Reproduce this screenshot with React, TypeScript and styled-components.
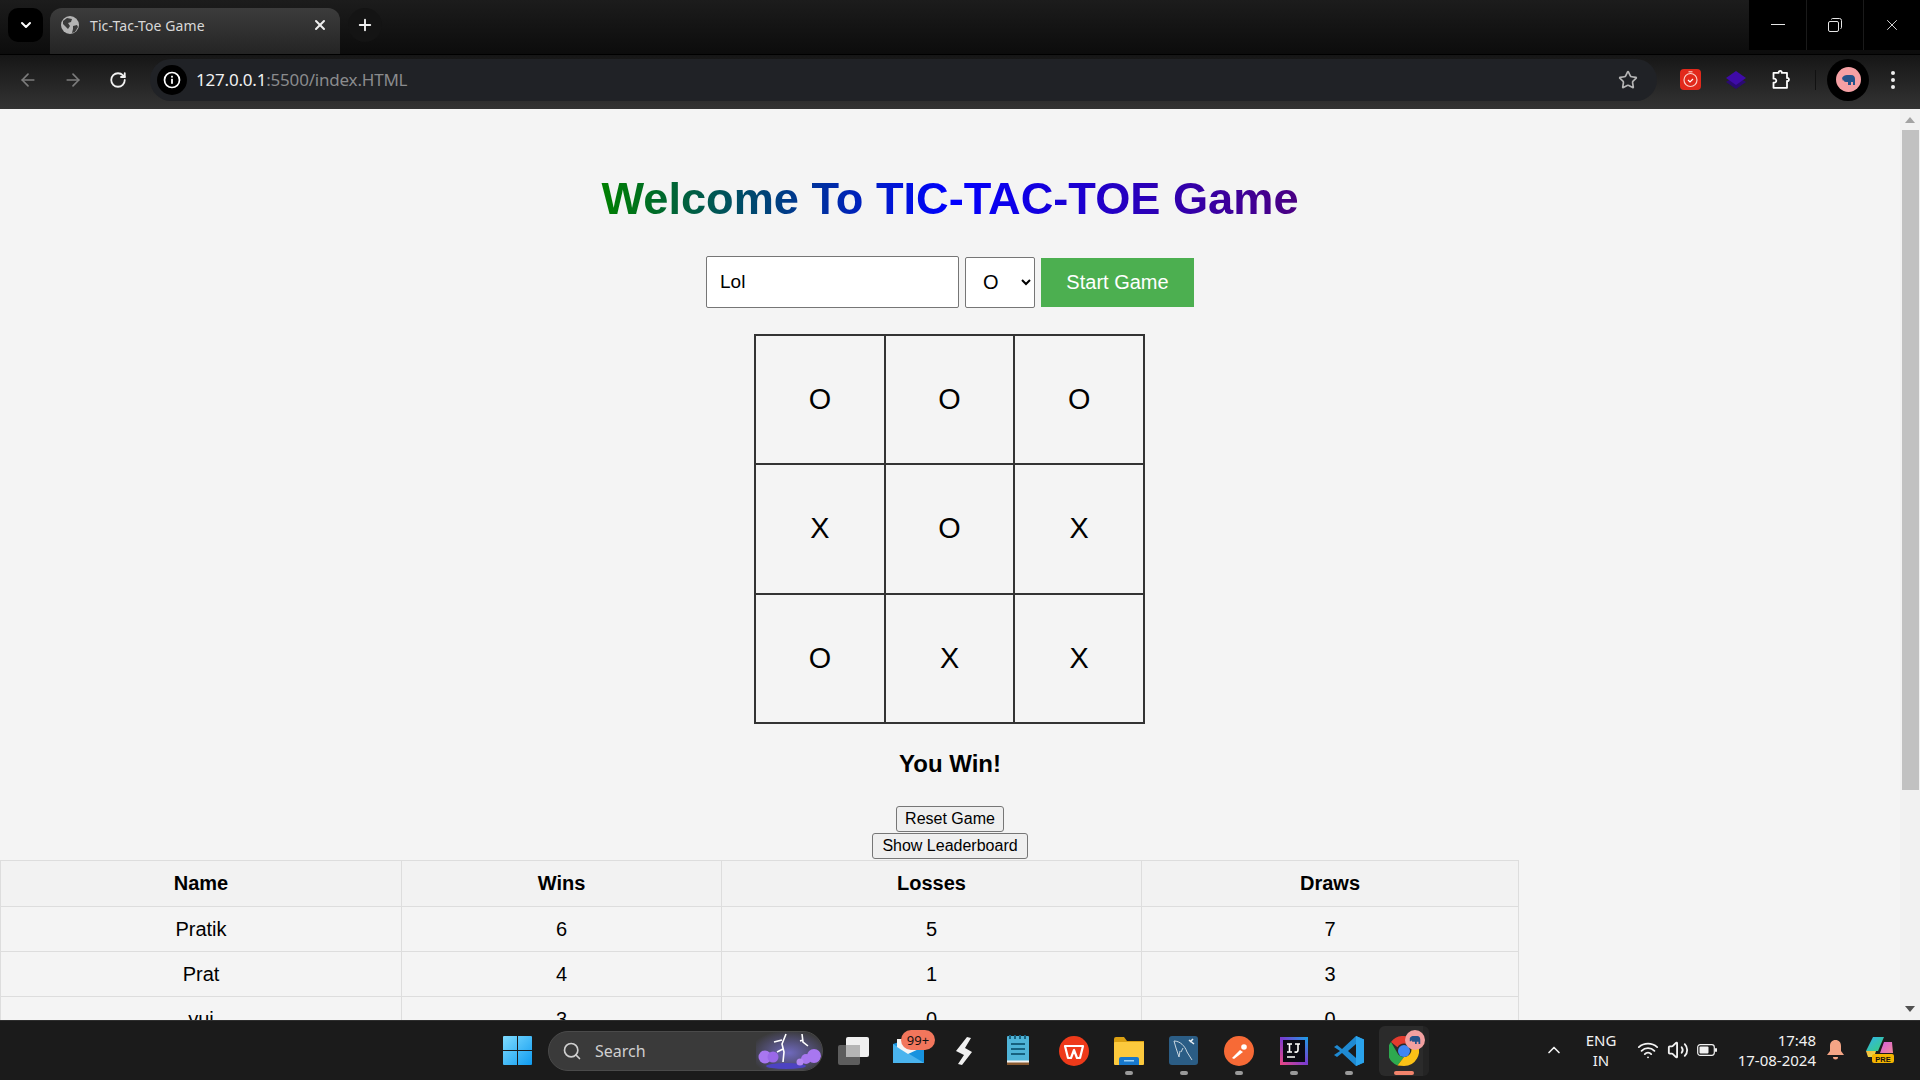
import React from 'react';
import styled, { createGlobalStyle } from 'styled-components';
import {
    ArrowLeft,
    ArrowRight,
    ChevronDown,
    ChevronUp,
    Plus,
    RotateCw,
    Search,
    Star,
    Volume2,
    Wifi,
    X,
} from 'lucide-react';

const GlobalStyle = createGlobalStyle`
    html, body {
        margin: 0;
        padding: 0;
        overflow: hidden;
        background: #f4f4f4;
    }
    * {
        box-sizing: border-box;
    }
`;

const Shell = styled.div`
    width: 1920px;
    height: 1080px;
    display: flex;
    flex-direction: column;
    overflow: hidden;
    font-family: 'Liberation Sans', Arial, sans-serif;
`;

/* browser chrome */

const TabStrip = styled.div`
    height: 55px;
    flex: none;
    display: flex;
    align-items: flex-start;
    padding: 8px 0 0 8px;
    background: linear-gradient(#1c1c1c, #0c0c0c);
    border-bottom: 1px solid #000;
`;

const TabListButton = styled.div`
    width: 35px;
    height: 34px;
    flex: none;
    display: flex;
    align-items: center;
    justify-content: center;
    background: #000;
    border-radius: 10px;
    color: #fff;
`;

const Tab = styled.div`
    width: 290px;
    height: 46px;
    flex: none;
    margin-left: 7px;
    padding: 0 12px 12px 10px;
    display: flex;
    align-items: center;
    gap: 10px;
    border-radius: 12px 12px 0 0;
    background: linear-gradient(#3c3c3c, #242424);
    color: #d8d8d8;
    font-family: 'Noto Sans', sans-serif;
    font-size: 14px;
    letter-spacing: 0.1px;
`;

const TabTitle = styled.span`
    flex: 1;
    white-space: nowrap;
`;

const NewTabButton = styled.div`
    width: 34px;
    height: 34px;
    flex: none;
    margin-left: 8px;
    display: flex;
    align-items: center;
    justify-content: center;
    border-radius: 50%;
    background: #141414;
    color: #f0f0f0;
`;

const WindowControls = styled.div`
    margin-left: auto;
    margin-top: -8px;
    height: 50px;
    display: flex;
    background: #000;
`;

const WindowButton = styled.div<{ $divided?: boolean }>`
    width: 57px;
    height: 50px;
    display: flex;
    align-items: center;
    justify-content: center;
    color: #e6e6e6;
    border-left: ${props => (props.$divided ? '1px solid #1a1a1a' : 'none')};
`;

const Toolbar = styled.div`
    height: 54px;
    flex: none;
    display: flex;
    align-items: center;
    padding-bottom: 5px;
    background: linear-gradient(#161616, #333333);
`;

const NavButton = styled.div<{ $dim?: boolean }>`
    width: 45px;
    height: 36px;
    flex: none;
    display: flex;
    align-items: center;
    justify-content: center;
    color: ${props => (props.$dim ? '#7c7c7c' : '#f2f2f2')};
`;

const NavGroup = styled.div`
    width: 140px;
    flex: none;
    display: flex;
    padding-left: 5px;
`;

const AddressBar = styled.div`
    width: 1507px;
    height: 42px;
    flex: none;
    margin-left: 10px;
    padding: 0 7px;
    display: flex;
    align-items: center;
    border-radius: 21px;
    background: #202226;
`;

const InfoBadge = styled.div`
    width: 30px;
    height: 30px;
    flex: none;
    display: flex;
    align-items: center;
    justify-content: center;
    border-radius: 50%;
    background: #000;
`;

const Url = styled.div`
    flex: 1;
    margin-left: 9px;
    font-family: 'Noto Sans', sans-serif;
    font-size: 17px;
    letter-spacing: -0.2px;
    color: #8a8b8d;
`;

const UrlHost = styled.span`
    color: #f1f1f1;
`;

const StarSlot = styled.div`
    width: 30px;
    margin-right: 7px;
    display: flex;
    justify-content: center;
    color: #b5b5b5;
`;

const ExtensionSlot = styled.div`
    width: 46px;
    flex: none;
    display: flex;
    align-items: center;
    justify-content: center;
`;

const Extensions = styled.div`
    display: flex;
    align-items: center;
    margin-left: 10px;
`;

const ToolbarDivider = styled.div`
    width: 1px;
    height: 20px;
    margin: 0 11px 0 10px;
    background: #111;
`;

const AvatarRing = styled.div`
    width: 42px;
    height: 42px;
    flex: none;
    display: flex;
    align-items: center;
    justify-content: center;
    border-radius: 50%;
    background: #000;
`;

const MenuDots = styled.div`
    width: 48px;
    display: flex;
    justify-content: center;
`;

/* page */

const PageArea = styled.div`
    flex: 1;
    min-height: 0;
    display: flex;
    background: #f4f4f4;
`;

const PageScroll = styled.main`
    flex: 1;
    min-width: 0;
    overflow: hidden;
    display: flex;
    flex-direction: column;
    align-items: center;
`;

const Heading = styled.h1`
    flex: none;
    margin: 64px 0 31px;
    font-size: 45.2px;
    line-height: 52px;
    font-weight: 700;
    background: linear-gradient(to right, green, blue, indigo);
    -webkit-background-clip: text;
    background-clip: text;
    color: transparent;
`;

const SetupRow = styled.div`
    flex: none;
    display: flex;
    align-items: center;
    gap: 6px;
    height: 52px;
`;

const NameInput = styled.input`
    width: 253px;
    height: 52px;
    padding: 0 13px;
    border: 1px solid #767676;
    border-radius: 2px;
    background: #fff;
    font-family: inherit;
    font-size: 19px;
    color: #000;
`;

const MarkSelect = styled.select`
    width: 70px;
    height: 51px;
    padding: 0 0 0 13px;
    border: 1px solid #767676;
    border-radius: 2px;
    background-color: #fff;
    font-family: inherit;
    font-size: 20px;
    color: #000;
`;

const StartButton = styled.button`
    width: 153px;
    height: 49px;
    border: none;
    background: #4caf50;
    color: #fff;
    font-family: inherit;
    font-size: 20px;
`;

const Board = styled.div`
    flex: none;
    width: 391px;
    height: 390px;
    margin: 26px 1px 0 0;
    display: grid;
    grid-template-columns: repeat(3, 1fr);
    grid-template-rows: repeat(3, 1fr);
    border: 1px solid #333;
`;

const Cell = styled.div`
    display: flex;
    align-items: center;
    justify-content: center;
    border: 1px solid #333;
    font-size: 28.8px;
    color: #000;
`;

const Result = styled.div`
    flex: none;
    margin-top: 26px;
    height: 28px;
    line-height: 28px;
    font-size: 24px;
    font-weight: 700;
    color: #000;
`;

const ActionButton = styled.button<{ $pad: number }>`
    flex: none;
    display: block;
    height: 26px;
    padding: 0 ${props => props.$pad}px;
    border: 1px solid #767676;
    border-radius: 3px;
    background: #efefef;
    font-family: inherit;
    font-size: 16px;
    color: #000;
`;

const ResetButton = styled(ActionButton)`
    margin-top: 28px;
    margin-bottom: 1px;
`;

const Leaderboard = styled.table`
    flex: none;
    align-self: flex-start;
    width: 1518px;
    margin-top: 1px;
    border-collapse: collapse;
    table-layout: fixed;
    font-size: 20px;
    color: #000;
`;

const HeadCell = styled.th`
    height: 46px;
    padding: 0;
    border: 1px solid #ddd;
    background: #f2f2f2;
    text-align: center;
    font-weight: 700;
`;

const DataCell = styled.td`
    height: 45px;
    padding: 0;
    border: 1px solid #ddd;
    text-align: center;
`;

const Scrollbar = styled.div`
    width: 20px;
    flex: none;
    display: flex;
    flex-direction: column;
    align-items: center;
    background: #f1f1f1;
`;

const ScrollArrow = styled.div<{ $down?: boolean }>`
    height: 21px;
    flex: none;
    display: flex;
    align-items: center;
    justify-content: center;
    transform: ${props => (props.$down ? 'rotate(180deg)' : 'none')};
`;

const ScrollThumb = styled.div`
    width: 17px;
    height: 660px;
    flex: none;
    background: #c1c1c1;
`;

const ScrollGap = styled.div`
    flex: 1;
`;

/* taskbar */

const Taskbar = styled.footer`
    position: relative;
    height: 60px;
    flex: none;
    display: flex;
    align-items: center;
    padding-left: 490px;
    background: #1b1b1b;
    border-top: 1px solid #2e2e2e;
`;

const TaskSlot = styled.div`
    position: relative;
    width: 55px;
    height: 50px;
    flex: none;
    display: flex;
    align-items: center;
    justify-content: center;
`;

const ActiveSlot = styled(TaskSlot)`
    width: 50px;
    margin-left: 3px;
    border-radius: 6px;
    background: linear-gradient(to right, #2b2b2b 44px, #242424 44px);
`;

const RunDot = styled.span<{ $active?: boolean }>`
    position: absolute;
    bottom: 1px;
    left: 50%;
    width: ${props => (props.$active ? 20 : 8)}px;
    height: 4px;
    margin-left: ${props => (props.$active ? -10 : -4)}px;
    border-radius: 2px;
    background: ${props => (props.$active ? '#f2846c' : '#9a9a9a')};
`;

const SearchPill = styled.div`
    position: relative;
    width: 275px;
    height: 40px;
    flex: none;
    margin: 0 3px 0 3px;
    display: flex;
    align-items: center;
    gap: 13px;
    padding-left: 13px;
    overflow: hidden;
    border-radius: 20px;
    background: #3a3a3a;
    border: 1px solid #4a4a4a;
    color: #cfcfcf;
    font-family: 'Noto Sans', sans-serif;
    font-size: 16px;
`;

const SearchArt = styled.div`
    position: absolute;
    right: 0;
    top: 0;
    height: 38px;
`;

const MailBadge = styled.span`
    position: absolute;
    top: 4px;
    right: 1px;
    width: 34px;
    height: 20px;
    display: flex;
    align-items: center;
    justify-content: center;
    border-radius: 10px;
    background: #f2765c;
    color: #111;
    font-family: 'Noto Sans', sans-serif;
    font-size: 13px;
`;

const ProfileBadge = styled.span`
    position: absolute;
    top: 4px;
    right: 4px;
    width: 20px;
    height: 20px;
    border-radius: 50%;
    background: #f2a0a0;
    display: flex;
    align-items: center;
    justify-content: center;
`;

const Tray = styled.div`
    position: absolute;
    top: 0;
    right: 0;
    height: 57px;
    width: 380px;
    display: flex;
    align-items: center;
    color: #f2f2f2;
    font-family: 'Noto Sans', sans-serif;
`;

const TrayChevron = styled.div`
    width: 27px;
    display: flex;
    justify-content: center;
`;

const Language = styled.div`
    width: 50px;
    margin-left: 9px;
    text-align: center;
    font-size: 15px;
    line-height: 20px;
`;

const TrayIcons = styled.div`
    display: flex;
    align-items: center;
    gap: 8px;
    margin-left: 11px;
`;

const Clock = styled.div`
    width: 90px;
    margin-left: 9px;
    text-align: right;
    font-size: 15px;
    line-height: 20px;
    white-space: nowrap;
`;

const BellSlot = styled.div`
    width: 38px;
    display: flex;
    justify-content: center;
`;

const CopilotSlot = styled.div`
    width: 48px;
    margin-left: 2px;
    display: flex;
    justify-content: center;
`;

const board = ['O', 'O', 'O', 'X', 'O', 'X', 'O', 'X', 'X'];

const players = [
    { name: 'Pratik', wins: 6, losses: 5, draws: 7 },
    { name: 'Prat', wins: 4, losses: 1, draws: 3 },
    { name: 'yui', wins: 3, losses: 0, draws: 0 },
];

const GlobeIcon = () => (
    <svg width="20" height="20" viewBox="0 0 20 20">
        <circle cx="10" cy="10" r="9" fill="#b4b4b4" />
        <path d="M3 6l4-3 5 1-1 3-3 1 2 3-2 3-3-3-2-2z" fill="#3a3a3a" />
        <path d="M13 11l4-1 1 2-3 5-3 1 1-4z" fill="#3a3a3a" />
    </svg>
);

const InfoIcon = () => (
    <svg width="18" height="18" viewBox="0 0 18 18" fill="none">
        <circle cx="9" cy="9" r="7.5" stroke="#fff" strokeWidth="1.7" />
        <rect x="8.1" y="7.8" width="1.8" height="5" fill="#fff" />
        <rect x="8.1" y="4.8" width="1.8" height="1.8" fill="#fff" />
    </svg>
);

const TimerExtension = () => (
    <svg width="21" height="21" viewBox="0 0 21 21">
        <rect width="21" height="21" rx="4" fill="#e2291b" />
        <circle cx="10.5" cy="11" r="6.5" fill="none" stroke="#fbd0c8" strokeWidth="1.2" />
        <path d="M8.5 2.8h4" stroke="#fbd0c8" strokeWidth="1.2" />
        <path d="M8 11l2 2 3-3" fill="none" stroke="#fff" strokeWidth="1.2" />
    </svg>
);

const LayersExtension = () => (
    <svg width="22" height="22" viewBox="0 0 22 22">
        <path d="M1 13l10-6 10 6-10 7z" fill="#2a0a72" />
        <path d="M1 9l10-7 10 7-10 7z" fill="#3f0ba8" />
    </svg>
);

const PuzzleIcon = () => (
    <svg width="22" height="22" viewBox="0 0 22 22" fill="none">
        <path
            d="M2.5 3.8h5.2c-.5-2.6 3.6-2.6 3 0h5.300v5.200c2.600-.5 2.600 3.600 0 3v6.800H2.500v-5.200c2 .5 2.800-1 2.800-1.800S4.500 9.200 2.500 9.700z"
            stroke="#fff"
            strokeWidth="1.8"
            strokeLinejoin="round"
        />
    </svg>
);

const Elephant = ({ size }: { size: number }) => (
    <svg width={size} height={size} viewBox="0 0 24 24">
        <path
            d="M3 9c1-3 4-4 7-4h6c3 0 5 2 5 6v8h-3v-4h-3v4h-3v-4H9c-2 0-3-1-3-3l-1 2H3z"
            fill="#24528a"
        />
    </svg>
);

const WindowsLogo = () => (
    <svg width="29" height="29" viewBox="0 0 29 29">
        <defs>
            <linearGradient id="win" x1="0" y1="0" x2="1" y2="1">
                <stop offset="0" stopColor="#7fdcff" />
                <stop offset="1" stopColor="#0f9bf0" />
            </linearGradient>
        </defs>
        <path d="M0 1a1 1 0 0 1 1-1h13v14H0zM15 0h13a1 1 0 0 1 1 1v13H15zM0 15h14v14H1a1 1 0 0 1-1-1zM15 15h14v13a1 1 0 0 1-1 1H15z" fill="url(#win)" />
    </svg>
);

const StormArt = () => (
    <svg width="66" height="38" viewBox="0 0 66 38">
        <defs>
            <radialGradient id="storm" cx="0.5" cy="0.55" r="0.6">
                <stop offset="0" stopColor="#6f69bd" />
                <stop offset="1" stopColor="#3a3a3a" />
            </radialGradient>
        </defs>
        <rect width="66" height="38" fill="url(#storm)" />
        <path d="M30 2l-4 10 2 8-1 10M26 8l-8 2M27 17l-6 3M46 2l1 8 5 4M47 8l-3 1" fill="none" stroke="#fff" strokeWidth="1.600" />
        <ellipse cx="30" cy="34" rx="20" ry="3" fill="#4d43c2" />
        <circle cx="9" cy="25" r="6.500" fill="#a877f0" />
        <circle cx="17" cy="25" r="5.500" fill="#9a68e8" />
        <circle cx="50" cy="27" r="5" fill="#a877f0" />
        <circle cx="58" cy="24" r="7" fill="#a877f0" />
        <circle cx="44" cy="30" r="3.500" fill="#b488f2" />
    </svg>
);

const TaskViewIcon = () => (
    <svg width="31" height="28" viewBox="0 0 31 28">
        <rect y="8" width="22" height="20" rx="2" fill="#5d5d5d" />
        <rect x="8" width="23" height="20" rx="2" fill="#f0f0f0" />
        <rect x="8" y="8" width="14" height="12" fill="#b5b5b5" />
    </svg>
);

const MailIcon = () => (
    <svg width="31" height="24" viewBox="0 0 31 24">
        <path d="M0 5l15-5 16 5v19H0z" fill="#1793df" />
        <path d="M0 5l31 19H0z" fill="#4ab4ee" />
        <path d="M4 0h24v9l-13 6L4 8z" fill="#f5f5f5" />
    </svg>
);

const BoltAppIcon = () => (
    <svg width="16" height="28" viewBox="0 0 16 28">
        <path d="M11 0l4 1-6 10 7 4-10 13-4-1 6-9-8-4z" fill="#f0f0f0" />
    </svg>
);

const NotepadIcon = () => (
    <svg width="23" height="31" viewBox="0 0 23 31">
        <rect y="1" width="22" height="29" rx="1" fill="#4fb4d8" />
        <rect y="27" width="22" height="3" fill="#8a5a30" />
        <rect y="25.500" width="22" height="2" fill="#f2f2f2" />
        <path d="M4 9h14M4 14h14M4 19h14" stroke="#17617f" strokeWidth="2" />
        <path d="M3 0v4M8 0v4M13 0v4M18 0v4" stroke="#17617f" strokeWidth="2" />
    </svg>
);

const WpsIcon = () => (
    <svg width="30" height="30" viewBox="0 0 30 30">
        <circle cx="15" cy="15" r="15" fill="#ee3a1a" />
        <path d="M6 10h18l-3 12h-3l-3-8-3 8H9z" fill="none" stroke="#fff" strokeWidth="2.200" strokeLinejoin="round" />
    </svg>
);

const FolderIcon = () => (
    <svg width="30" height="28" viewBox="0 0 30 28">
        <path d="M0 2a2 2 0 0 1 2-2h8l3 4h17v6H0z" fill="#dba012" />
        <rect y="5" width="30" height="23" rx="1" fill="#fcc93d" />
        <path d="M5 28v-6a2 2 0 0 1 2-2h16a2 2 0 0 1 2 2v6z" fill="#1778cc" />
        <rect x="10" y="23" width="10" height="1.500" fill="#9ad0f5" />
    </svg>
);

const MysqlIcon = () => (
    <svg width="29" height="29" viewBox="0 0 29 29">
        <rect width="29" height="29" rx="3" fill="#2b5d85" />
        <path d="M5 5c6 0 11 5 13 11l5 8M5 5l2 7 2 6 1 3 1-6M14 12l-2 4" fill="none" stroke="#c8d6e0" strokeWidth="1" />
        <path d="M20 4l5 4M24 3l-3 3" stroke="#e8eef2" strokeWidth="1.600" />
    </svg>
);

const PostmanIcon = () => (
    <svg width="30" height="30" viewBox="0 0 30 30">
        <circle cx="15" cy="15" r="15" fill="#f76a36" />
        <path d="M8 22l8-8 3 2-9 7z" fill="#fff" />
        <circle cx="20" cy="11" r="2.800" fill="#fff" />
    </svg>
);

const IntellijIcon = () => (
    <svg width="28" height="28" viewBox="0 0 28 28">
        <defs>
            <linearGradient id="ij" x1="0" y1="1" x2="1" y2="0">
                <stop offset="0" stopColor="#f0477f" />
                <stop offset="0.5" stopColor="#7a3bd0" />
                <stop offset="1" stopColor="#17a3e8" />
            </linearGradient>
        </defs>
        <rect width="28" height="28" fill="url(#ij)" />
        <rect x="3" y="3" width="22" height="22" fill="#0a0a14" />
        <path d="M7 7h5M9.500 7v8M7 15h5M15 7h5M18 7v6c0 2-2 2.500-3.500 1.800M7 20h8" fill="none" stroke="#fff" strokeWidth="1.600" />
    </svg>
);

const VscodeIcon = () => (
    <svg width="30" height="30" viewBox="0 0 30 30">
        <path d="M22 0l8 3.500v23L22 30 8 17l-5 4-3-2 6-4-6-4 3-2 5 4z" fill="#1f8ad2" />
        <path d="M22 8l-8 7 8 7z" fill="#1b1b1b" />
        <path d="M22 0l8 3.500v23L22 30z" fill="#2aa3ec" />
    </svg>
);

const ChromeIcon = () => (
    <svg width="30" height="30" viewBox="0 0 30 30">
        <path d="M15 0a15 15 0 0 1 13 7.500H15a7.500 7.500 0 0 0-6.500 3.700L2 6A15 15 0 0 1 15 0z" fill="#e33b2e" />
        <path d="M2 6l6.500 11.200a7.500 7.500 0 0 0 6.500 3.800L8.500 29.500A15 15 0 0 1 2 6z" fill="#2da94f" />
        <path d="M28 7.500A15 15 0 0 1 15 30l-6.500-.5L15 21a7.500 7.500 0 0 0 6.500-11.200z" fill="#fbc116" />
        <circle cx="15" cy="15" r="6" fill="#3f86f4" />
    </svg>
);

const BatteryIcon = () => (
    <svg width="20" height="12" viewBox="0 0 20 12" fill="none">
        <rect x="0.700" y="0.700" width="16.600" height="10.600" rx="2.500" stroke="#f2f2f2" strokeWidth="1.200" />
        <rect x="2.500" y="2.500" width="9" height="7" rx="1" fill="#f2f2f2" />
        <rect x="18" y="4" width="2" height="4" rx="1" fill="#f2f2f2" />
    </svg>
);

const BellIcon = () => (
    <svg width="17" height="20" viewBox="0 0 17 20">
        <path d="M8.500 0c3.500 0 5.500 2.500 5.500 6v5l3 4H0l3-4V6c0-3.500 2-6 5.500-6z" fill="#f5a585" />
        <path d="M6 17h5a2.500 2.500 0 0 1-5 0z" fill="#f5a585" />
    </svg>
);

const CopilotIcon = () => (
    <svg width="30" height="28" viewBox="0 0 30 28">
        <defs>
            <linearGradient id="cpa" x1="0" y1="0" x2="1" y2="1">
                <stop offset="0" stopColor="#2fb2f0" />
                <stop offset="1" stopColor="#3bd07a" />
            </linearGradient>
            <linearGradient id="cpb" x1="0" y1="0" x2="1" y2="1">
                <stop offset="0" stopColor="#f6b73c" />
                <stop offset="1" stopColor="#e8e04a" />
            </linearGradient>
            <linearGradient id="cpc" x1="0" y1="0" x2="1" y2="1">
                <stop offset="0" stopColor="#d35ce0" />
                <stop offset="1" stopColor="#f28a9a" />
            </linearGradient>
        </defs>
        <path d="M8 1h11l-6 14H1z" fill="url(#cpa)" />
        <path d="M1 15h10l-2 6H3z" fill="url(#cpb)" />
        <path d="M19 6h8l1 11h-13z" fill="url(#cpc)" />
        <rect x="7" y="18" width="22" height="9" rx="2" fill="#f4b400" />
        <text x="18" y="25.500" textAnchor="middle" fontSize="7.500" fontWeight="700" fill="#111" fontFamily="Liberation Sans">
            PRE
        </text>
    </svg>
);

const App = () => (
    <Shell>
        <GlobalStyle />
        <TabStrip>
            <TabListButton>
                <ChevronDown size={16} strokeWidth={3} />
            </TabListButton>
            <Tab>
                <GlobeIcon />
                <TabTitle>Tic-Tac-Toe Game</TabTitle>
                <X size={16} strokeWidth={3} color="#eee" />
            </Tab>
            <NewTabButton>
                <Plus size={18} strokeWidth={2.5} />
            </NewTabButton>
            <WindowControls>
                <WindowButton>
                    <svg width="14" height="2" viewBox="0 0 14 2">
                        <rect width="14" height="1" fill="#e6e6e6" />
                    </svg>
                </WindowButton>
                <WindowButton $divided>
                    <svg width="14" height="14" viewBox="0 0 14 14" fill="none" stroke="#e6e6e6">
                        <rect x="0.500" y="3.500" width="10" height="10" rx="1.500" />
                        <path d="M3.500 1.500a1 1 0 0 1 1-1h7a2 2 0 0 1 2 2v7a1 1 0 0 1-1 1" />
                    </svg>
                </WindowButton>
                <WindowButton $divided>
                    <X size={18} strokeWidth={1.2} />
                </WindowButton>
            </WindowControls>
        </TabStrip>
        <Toolbar>
            <NavGroup>
                <NavButton $dim>
                    <ArrowLeft size={20} />
                </NavButton>
                <NavButton $dim>
                    <ArrowRight size={20} />
                </NavButton>
                <NavButton>
                    <RotateCw size={18} strokeWidth={2.4} />
                </NavButton>
            </NavGroup>
            <AddressBar>
                <InfoBadge>
                    <InfoIcon />
                </InfoBadge>
                <Url>
                    <UrlHost>127.0.0.1</UrlHost>:5500/index.HTML
                </Url>
                <StarSlot>
                    <Star size={20} strokeWidth={2} />
                </StarSlot>
            </AddressBar>
            <Extensions>
                <ExtensionSlot>
                    <TimerExtension />
                </ExtensionSlot>
                <ExtensionSlot>
                    <LayersExtension />
                </ExtensionSlot>
                <ExtensionSlot>
                    <PuzzleIcon />
                </ExtensionSlot>
                <ToolbarDivider />
                <AvatarRing>
                    <svg width="25" height="25" viewBox="0 0 25 25">
                        <circle cx="12.500" cy="12.500" r="12.500" fill="#f5a0a4" />
                        <path d="M6 11c1-2 3-3 5-3h4c3 0 4 2 4 4v6h-2v-3h-2v3h-3v-3h-2c-2 0-2-1-2-2l-1 1z" fill="#24528a" />
                    </svg>
                </AvatarRing>
                <MenuDots>
                    <svg width="4" height="18" viewBox="0 0 4 18">
                        <circle cx="2" cy="2" r="2" fill="#eee" />
                        <circle cx="2" cy="9" r="2" fill="#eee" />
                        <circle cx="2" cy="16" r="2" fill="#eee" />
                    </svg>
                </MenuDots>
            </Extensions>
        </Toolbar>
        <PageArea>
            <PageScroll>
                <Heading>Welcome To TIC-TAC-TOE Game</Heading>
                <SetupRow>
                    <NameInput defaultValue="Lol" />
                    <MarkSelect defaultValue="O">
                        <option>X</option>
                        <option>O</option>
                    </MarkSelect>
                    <StartButton>Start Game</StartButton>
                </SetupRow>
                <Board>
                    {board.map((mark, index) => (
                        <Cell key={index}>{mark}</Cell>
                    ))}
                </Board>
                <Result>You Win!</Result>
                <ResetButton $pad={8}>Reset Game</ResetButton>
                <ActionButton $pad={9}>Show Leaderboard</ActionButton>
                <Leaderboard>
                    <colgroup>
                        <col width="401" />
                        <col width="320" />
                        <col width="420" />
                        <col width="377" />
                    </colgroup>
                    <thead>
                        <tr>
                            <HeadCell>Name</HeadCell>
                            <HeadCell>Wins</HeadCell>
                            <HeadCell>Losses</HeadCell>
                            <HeadCell>Draws</HeadCell>
                        </tr>
                    </thead>
                    <tbody>
                        {players.map(player => (
                            <tr key={player.name}>
                                <DataCell>{player.name}</DataCell>
                                <DataCell>{player.wins}</DataCell>
                                <DataCell>{player.losses}</DataCell>
                                <DataCell>{player.draws}</DataCell>
                            </tr>
                        ))}
                    </tbody>
                </Leaderboard>
            </PageScroll>
            <Scrollbar>
                <ScrollArrow>
                    <svg width="10" height="6" viewBox="0 0 10 6">
                        <path d="M5 0l5 6H0z" fill="#a3a3a3" />
                    </svg>
                </ScrollArrow>
                <ScrollThumb />
                <ScrollGap />
                <ScrollArrow $down>
                    <svg width="10" height="6" viewBox="0 0 10 6">
                        <path d="M5 0l5 6H0z" fill="#505050" />
                    </svg>
                </ScrollArrow>
            </Scrollbar>
        </PageArea>
        <Taskbar>
            <TaskSlot>
                <WindowsLogo />
            </TaskSlot>
            <SearchPill>
                <Search size={20} />
                Search
                <SearchArt>
                    <StormArt />
                </SearchArt>
            </SearchPill>
            <TaskSlot>
                <TaskViewIcon />
            </TaskSlot>
            <TaskSlot>
                <MailIcon />
                <MailBadge>99+</MailBadge>
            </TaskSlot>
            <TaskSlot>
                <BoltAppIcon />
            </TaskSlot>
            <TaskSlot>
                <NotepadIcon />
            </TaskSlot>
            <TaskSlot>
                <WpsIcon />
            </TaskSlot>
            <TaskSlot>
                <FolderIcon />
                <RunDot />
            </TaskSlot>
            <TaskSlot>
                <MysqlIcon />
                <RunDot />
            </TaskSlot>
            <TaskSlot>
                <PostmanIcon />
                <RunDot />
            </TaskSlot>
            <TaskSlot>
                <IntellijIcon />
                <RunDot />
            </TaskSlot>
            <TaskSlot>
                <VscodeIcon />
                <RunDot />
            </TaskSlot>
            <ActiveSlot>
                <ChromeIcon />
                <ProfileBadge>
                    <Elephant size={14} />
                </ProfileBadge>
                <RunDot $active />
            </ActiveSlot>
            <Tray>
                <TrayChevron>
                    <ChevronUp size={20} strokeWidth={2} />
                </TrayChevron>
                <Language>
                    ENG
                    <br />
                    IN
                </Language>
                <TrayIcons>
                    <Wifi size={22} />
                    <Volume2 size={22} />
                    <BatteryIcon />
                </TrayIcons>
                <Clock>
                    17:48
                    <br />
                    17-08-2024
                </Clock>
                <BellSlot>
                    <BellIcon />
                </BellSlot>
                <CopilotSlot>
                    <CopilotIcon />
                </CopilotSlot>
            </Tray>
        </Taskbar>
    </Shell>
);

export default App;
